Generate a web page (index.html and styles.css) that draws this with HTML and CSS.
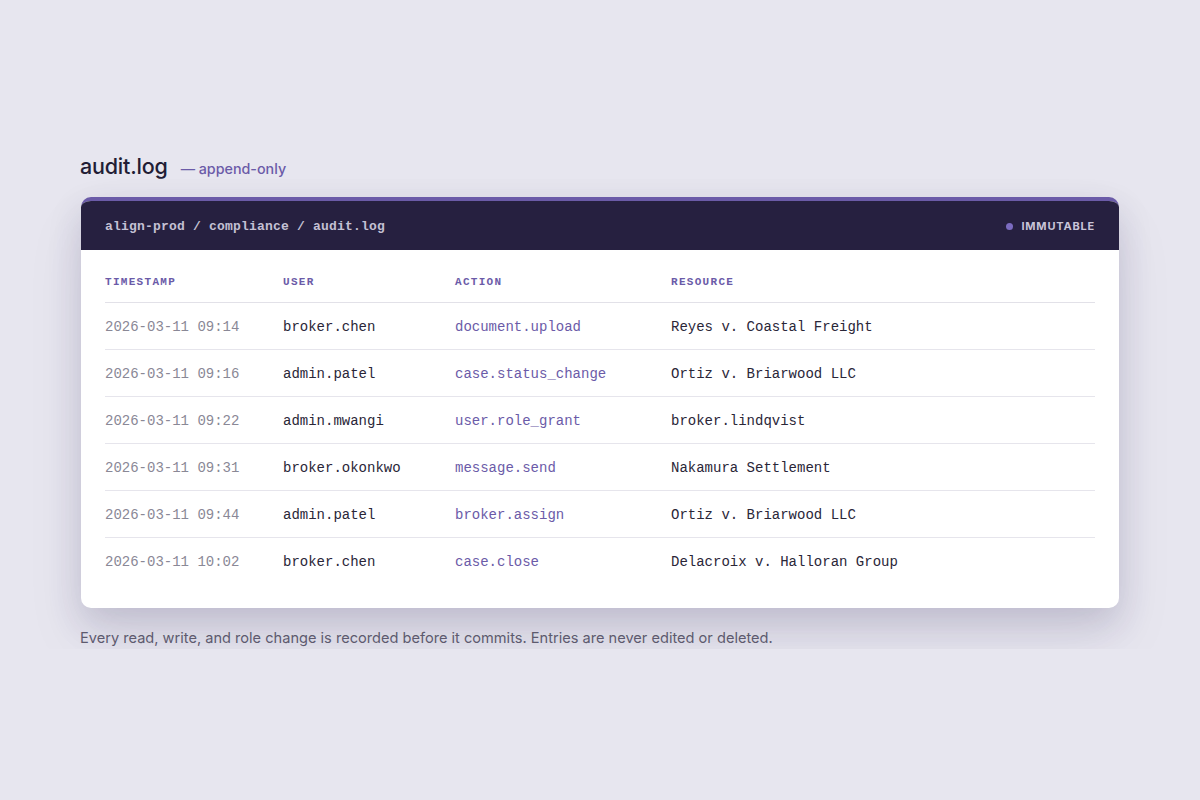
FILE: index.html
```html
<!DOCTYPE html>
<html lang="en">
<head>
<meta charset="utf-8">
<title>audit.log</title>
<link rel="stylesheet" href="styles.css">
</head>
<body>
<main class="wrap">
  <div class="title-row">
    <h1 class="title">audit.log</h1>
    <span class="subtitle">— append-only</span>
  </div>
  <section class="card">
    <header class="bar">
      <span class="path">align-prod / compliance / audit.log</span>
      <span class="badge"><span class="dot"></span>IMMUTABLE</span>
    </header>
    <div class="body">
      <table class="log">
        <thead>
          <tr><th class="c1">TIMESTAMP</th><th class="c2">USER</th><th class="c3">ACTION</th><th>RESOURCE</th></tr>
        </thead>
        <tbody>
          <tr><td class="ts">2026-03-11 09:14</td><td class="user">broker.chen</td><td class="act">document.upload</td><td class="res">Reyes v. Coastal Freight</td></tr>
          <tr><td class="ts">2026-03-11 09:16</td><td class="user">admin.patel</td><td class="act">case.status_change</td><td class="res">Ortiz v. Briarwood LLC</td></tr>
          <tr><td class="ts">2026-03-11 09:22</td><td class="user">admin.mwangi</td><td class="act">user.role_grant</td><td class="res">broker.lindqvist</td></tr>
          <tr><td class="ts">2026-03-11 09:31</td><td class="user">broker.okonkwo</td><td class="act">message.send</td><td class="res">Nakamura Settlement</td></tr>
          <tr><td class="ts">2026-03-11 09:44</td><td class="user">admin.patel</td><td class="act">broker.assign</td><td class="res">Ortiz v. Briarwood LLC</td></tr>
          <tr><td class="ts">2026-03-11 10:02</td><td class="user">broker.chen</td><td class="act">case.close</td><td class="res">Delacroix v. Halloran Group</td></tr>
        </tbody>
      </table>
    </div>
  </section>
  <p class="note">Every read, write, and role change is recorded before it commits. Entries are never edited or deleted.</p>
</main>
</body>
</html>
```

FILE: styles.css
```css
* { box-sizing: border-box; }
html, body { margin: 0; padding: 0; }
body {
  background: #e7e6ef;
  font-family: Inter, "Noto Sans", "Liberation Sans", sans-serif;
  color: #221d35;
}
.wrap {
  width: 1040px;
  margin: 0 auto;
  padding-top: 152px;
}
.title-row {
  display: flex;
  align-items: baseline;
  gap: 13px;
  height: 28px;
  margin-bottom: 17px;
}
.title {
  margin: 0;
  font-size: 21.5px;
  font-weight: 500;
  line-height: 28px;
  color: #221d35;
  letter-spacing: -0.2px;
}
.subtitle {
  font-size: 14.3px;
  color: #6b5ba8;
  font-weight: 500;
}
.card {
  margin: 0 1px;
  background: #ffffff;
  border-radius: 10px;
  border-top: 4px solid #6b5ba8;
  overflow: hidden;
  box-shadow: 0 14px 34px rgba(45, 35, 90, 0.16), 0 30px 60px rgba(45, 35, 90, 0.08);
}
.bar {
  background: #262040;
  height: 49px;
  padding: 1px 24px 0;
  display: flex;
  align-items: center;
  justify-content: space-between;
}
.path {
  font-family: "Liberation Mono", "DejaVu Sans Mono", monospace;
  font-weight: 700;
  font-size: 13px;
  letter-spacing: 0.2px;
  color: #c4c0d4;
}
.badge {
  display: flex;
  align-items: center;
  gap: 8px;
  font-size: 11px;
  font-weight: 700;
  letter-spacing: 0.8px;
  color: #c9c5d8;
}
.dot {
  width: 7px;
  height: 7px;
  border-radius: 50%;
  background: #7b6bc0;
}
.body {
  padding: 25px 24px 24px;
}
.log {
  width: 100%;
  border-collapse: collapse;
  font-family: "Liberation Mono", "DejaVu Sans Mono", monospace;
  font-size: 14px;
}
.log th {
  text-align: left;
  font-size: 11px;
  font-weight: 700;
  letter-spacing: 1.3px;
  color: #6b5ba8;
  line-height: 14px;
  padding: 0 0 13px 0;
  border-bottom: 1px solid #e2e1e8;
}
.c1 { width: 178px; }
.c2 { width: 172px; }
.c3 { width: 216px; }
.log td {
  padding: 17px 0 15px;
  line-height: 14px;
  border-bottom: 1px solid #e6e5ec;
  white-space: nowrap;
}
.log tbody tr:last-child td { border-bottom: none; }
.ts { color: #8a8896; }
.user { color: #2a2638; }
.act { color: #6b5ba8; }
.res { color: #2a2638; }
.note {
  margin: 19px 0 0;
  font-size: 14.6px;
  line-height: 22px;
  color: #5d5a6e;
}
```
